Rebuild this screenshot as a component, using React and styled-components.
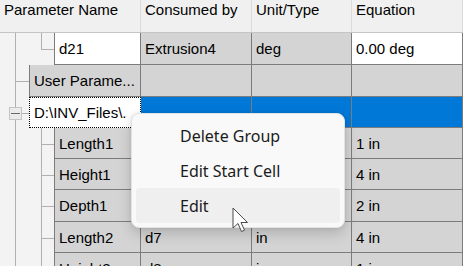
import React from "react";
import styled, { createGlobalStyle } from "styled-components";

const COLS = "141px 111px 100px 111px";
const LINE = "#7c7c7c";
const TREE = "#b0b0b0";

const GlobalStyle = createGlobalStyle`
  html, body {
    margin: 0;
    padding: 0;
    background: #f3f3f3;
    overflow: hidden;
  }
  body {
    font-family: "Liberation Sans", Arial, sans-serif;
  }
`;

const Frame = styled.div`
  position: relative;
  width: 463px;
  height: 266px;
  overflow: hidden;
  background: #f3f3f3;
`;

const HeaderRow = styled.div`
  display: grid;
  grid-template-columns: ${COLS};
  height: 33px;
  box-sizing: border-box;
  background: #f0f0f0;
  border-bottom: 1px solid #c4c4c4;
`;

const HeaderCell = styled.div`
  padding: 1px 4px 0;
  font-size: 15px;
  line-height: 17px;
  color: #000;
  border-right: 1px solid #dadada;
  white-space: nowrap;
  overflow: hidden;
`;

const Row = styled.div`
  display: grid;
  grid-template-columns: ${COLS};
  height: ${(p) => p.$h}px;
`;

const NameCol = styled.div`
  display: flex;
  min-width: 0;
`;

const Gutter = styled.svg`
  flex: none;
  display: block;
`;

const Cell = styled.div`
  display: flex;
  align-items: center;
  min-width: 0;
  flex: 1;
  box-sizing: border-box;
  padding: 0 4px;
  font-size: 15px;
  color: #000;
  white-space: nowrap;
  overflow: hidden;
  background: ${(p) => p.$bg || "#d4d4d4"};
  border-right: 1px solid ${LINE};
  border-bottom: 1px solid ${LINE};
  border-left: ${(p) => (p.$first ? `1px solid ${LINE}` : "none")};
`;

const FocusCell = styled(Cell)`
  background: #fff;
  border: 1px dotted #000;
`;

const Menu = styled.div`
  position: absolute;
  left: 131px;
  top: 113px;
  width: 214px;
  box-sizing: border-box;
  padding: 4px;
  background: #f9f9f9;
  border: 1px solid #e2e2e2;
  border-radius: 8px;
  box-shadow: 0 6px 14px rgba(0, 0, 0, 0.16), 0 0 4px rgba(0, 0, 0, 0.08);
  font-family: "Noto Sans", "Open Sans", sans-serif;
`;

const MenuItem = styled.div`
  height: 35px;
  display: flex;
  align-items: center;
  padding-left: 44px;
  border-radius: 4px;
  font-size: 16px;
  line-height: 20px;
  color: #1b1b1b;
  background: ${(p) => (p.$hover ? "#efefef" : "transparent")};
`;

const Pointer = styled.svg`
  position: absolute;
  left: 232px;
  top: 207px;
`;

function TreeLines({ kind, h }) {
  const w = kind === "group" || kind === "open" ? 29 : 54;
  const mid = Math.round(h / 2) + 0.5;
  return (
    <Gutter width={w} height={h} viewBox={`0 0 ${w} ${h}`}>
      <g stroke={TREE} strokeWidth="1" fill="none" shapeRendering="crispEdges">
        {kind !== "open" && <line x1="15.5" y1="0" x2="15.5" y2={h} />}
        {kind === "group" && <line x1="15.5" y1={mid} x2={w} y2={mid} />}
        {kind === "last" && (
          <>
            <line x1="41.5" y1="0" x2="41.5" y2={mid} />
            <line x1="41.5" y1={mid} x2={w} y2={mid} />
          </>
        )}
        {kind === "child" && (
          <>
            <line x1="41.5" y1="0" x2="41.5" y2={h} />
            <line x1="41.5" y1={mid} x2={w} y2={mid} />
          </>
        )}
        {kind === "open" && (
          <>
            <line x1="15.5" y1="0" x2="15.5" y2={mid - 6} />
            <line x1="15.5" y1={mid + 6} x2="15.5" y2={h} />
            <rect x="9.5" y={mid - 6} width="12" height="12" fill="#ebebeb" stroke="#c4c4c4" />
            <line x1="11" y1={mid} x2="20" y2={mid} stroke="#6a6a6a" />
            <line x1="21.5" y1={mid} x2={w} y2={mid} />
          </>
        )}
      </g>
    </Gutter>
  );
}

// rows under the context menu keep their hidden cells empty
const rows = [
  { kind: "last", h: 32, name: "d21", by: "Extrusion4", unit: "deg", eq: "0.00 deg", white: true },
  { kind: "group", h: 32, name: "User Parame...", by: "", unit: "", eq: "" },
  { kind: "open", h: 31, name: "D:\\INV_Files\\.", selected: true },
  { kind: "child", h: 31, name: "Length1", by: "", unit: "", eq: "1 in" },
  { kind: "child", h: 31, name: "Height1", by: "", unit: "", eq: "4 in" },
  { kind: "child", h: 32, name: "Depth1", by: "", unit: "", eq: "2 in" },
  { kind: "child", h: 31, name: "Length2", by: "d7", unit: "in", eq: "4 in" },
  { kind: "child", h: 31, name: "Height2", by: "d8", unit: "in", eq: "1 in" },
];

export default function App() {
  return (
    <Frame>
      <GlobalStyle />
      <HeaderRow>
        <HeaderCell>Parameter Name</HeaderCell>
        <HeaderCell>Consumed by</HeaderCell>
        <HeaderCell>Unit/Type</HeaderCell>
        <HeaderCell>Equation</HeaderCell>
      </HeaderRow>

      {rows.map((r, i) => (
        <Row key={i} $h={r.h}>
          <NameCol>
            <TreeLines kind={r.kind} h={r.h} />
            {r.selected ? (
              <FocusCell>{r.name}</FocusCell>
            ) : (
              <Cell $first $bg={r.white ? "#fff" : undefined}>
                {r.name}
              </Cell>
            )}
          </NameCol>
          {r.selected ? (
            <>
              <Cell $bg="#0078d7" />
              <Cell $bg="#0078d7" />
              <Cell $bg="#0078d7" />
            </>
          ) : (
            <>
              <Cell>{r.by}</Cell>
              <Cell>{r.unit}</Cell>
              <Cell $bg={r.white ? "#fff" : undefined}>{r.eq}</Cell>
            </>
          )}
        </Row>
      ))}

      <Menu>
        <MenuItem>Delete Group</MenuItem>
        <MenuItem>Edit Start Cell</MenuItem>
        <MenuItem $hover>Edit</MenuItem>
      </Menu>

      <Pointer width="18" height="27" viewBox="0 0 18 27">
        <path
          d="M1 1 L1 21 L6 16.5 L9.5 24.5 L12.5 23.2 L9 15.5 L15.5 15.5 Z"
          fill="#fff"
          stroke="#4a4a4a"
          strokeWidth="1"
          strokeLinejoin="round"
        />
      </Pointer>
    </Frame>
  );
}
